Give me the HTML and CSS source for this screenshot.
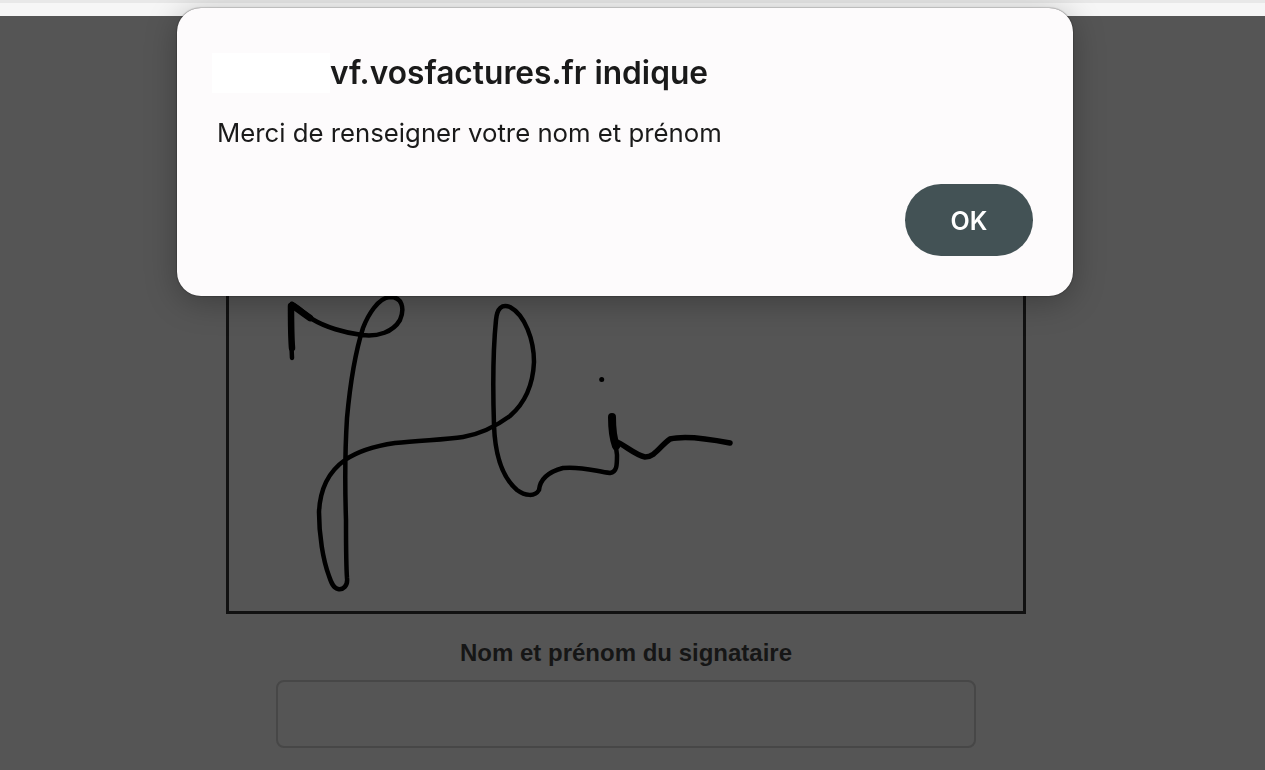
FILE: index.html
```html
<!DOCTYPE html>
<html lang="fr">
<head>
  <meta charset="UTF-8">
  <title>Signature</title>
  <link rel="stylesheet" href="styles.css">
</head>
<body>
  <!-- Browser chrome -->
  <div class="browser-bar"></div>

  <div class="page">
    <!-- Signature pad -->
    <div class="signature-box">
      <svg class="signature" viewBox="229 217 794 394">
        <path class="line" d="M292 358 C291 340 291 320 292 304 C300 308 305 314 312 319 C325 327 345 333 362 335 C378 337 393 332 400 320 C405 308 402 297 390 297 C378 298 368 315 363 328 C356 350 350 385 347 418 C345 450 345 490 346 520 C346 545 346 565 347 578 C348 586 343 590 338 589 C333 588 331 582 329 576 C323 560 319 535 319 512 C320 490 328 472 345 460 C358 451 375 446 395 443 C420 440 445 440 463 437 C480 434 495 427 510 416 C525 403 533 385 534 362 C534 340 525 315 510 307 C502 304 497 308 496 320 C493 350 493 395 494 425 C495 455 503 478 517 490 C525 496 535 497 539 490 C540 480 548 472 563 468 C580 466 595 471 610 473 C617 472 617 465 617 455 L615 440"/>
        <path class="line-tail" d="M615 441 C625 445 635 455 645 457 C655 457 660 446 670 439 C685 435 710 439 730 443"/>
        <path class="line-thick" d="M291 306 C291 320 291 335 292 348"/>
        <path class="line-thick" d="M292 305 C297 309 303 313 310 318"/>
        <path class="line-i" d="M612 417 C612 428 613 438 616 446"/>
        <circle class="dot" cx="601.7" cy="379.5" r="2.5"/>
      </svg>
    </div>

    <label class="field-label" for="signer">Nom et prénom du signataire</label>
    <input class="field-input" type="text" id="signer">
  </div>

  <!-- Alert dialog -->
  <div class="dialog">
    <div class="dialog-title">
      <span class="masked"></span>
      <span class="site-name">vf.vosfactures.fr indique</span>
    </div>
    <p class="dialog-message">Merci de renseigner votre nom et prénom</p>
    <div class="dialog-actions">
      <button class="ok-button" type="button">OK</button>
    </div>
  </div>
</body>
</html>
```
FILE: styles.css
```css
html, body {
  height: 770px;
  margin: 0;
  overflow: hidden;
}

body {
  background-color: #555555;
  font-family: "Liberation Sans", Arial, sans-serif;
}

.browser-bar {
  height: 13px;
  background-color: #f6f6f6;
  border-top: 3px solid #e8e8e8;
}

.page {
  display: flex;
  flex-direction: column;
  align-items: center;
  padding-top: 198px;
  padding-right: 13px;
}

.signature-box {
  width: 794px;
  height: 394px;
  border: 3px solid #111111;
}

.signature {
  display: block;
  width: 794px;
  height: 394px;
  filter: blur(0.6px);
}

.line {
  fill: none;
  stroke: #000000;
  stroke-width: 4.5;
  stroke-linecap: round;
  stroke-linejoin: round;
}

.line-tail {
  fill: none;
  stroke: #000000;
  stroke-width: 5.5;
  stroke-linecap: round;
  stroke-linejoin: round;
}

.line-thick {
  fill: none;
  stroke: #000000;
  stroke-width: 6.5;
  stroke-linecap: round;
}

.line-i {
  fill: none;
  stroke: #000000;
  stroke-width: 8;
  stroke-linecap: round;
}

.dot {
  fill: #000000;
}

.field-label {
  margin-top: 25px;
  font-size: 24px;
  line-height: 28px;
  font-weight: bold;
  color: #161616;
}

.field-input {
  box-sizing: border-box;
  width: 700px;
  height: 68px;
  margin-top: 13px;
  background: transparent;
  border: 2px solid #474747;
  border-radius: 8px;
}

.dialog {
  position: fixed;
  top: 8px;
  left: 177px;
  box-sizing: border-box;
  width: 896px;
  height: 288px;
  padding: 45px 40px 40px 35px;
  background-color: #fdfbfc;
  border-radius: 24px;
  box-shadow: 0 0 1.5px 0 rgba(0, 0, 0, 0.8), 0 6px 32px rgba(0, 0, 0, 0.28);
  font-family: Inter, "Noto Sans", sans-serif;
  color: #1a1a1a;
}

.dialog-title {
  display: flex;
  align-items: center;
  height: 40px;
  font-size: 31.7px;
  font-weight: 600;
}

.site-name {
  margin-top: -2px;
}

.masked {
  width: 118px;
  height: 40px;
  background-color: #ffffff;
}

.dialog-message {
  margin: 18px 0 0 5px;
  font-size: 25.75px;
  line-height: 44px;
}

.dialog-actions {
  display: flex;
  justify-content: flex-end;
  margin-top: 29px;
}

.ok-button {
  width: 128px;
  height: 72px;
  padding: 2px 0 0;
  border: none;
  border-radius: 36px;
  background-color: #435255;
  color: #ffffff;
  font-family: Inter, "Noto Sans", sans-serif;
  font-size: 25px;
  font-weight: 600;
}
```
